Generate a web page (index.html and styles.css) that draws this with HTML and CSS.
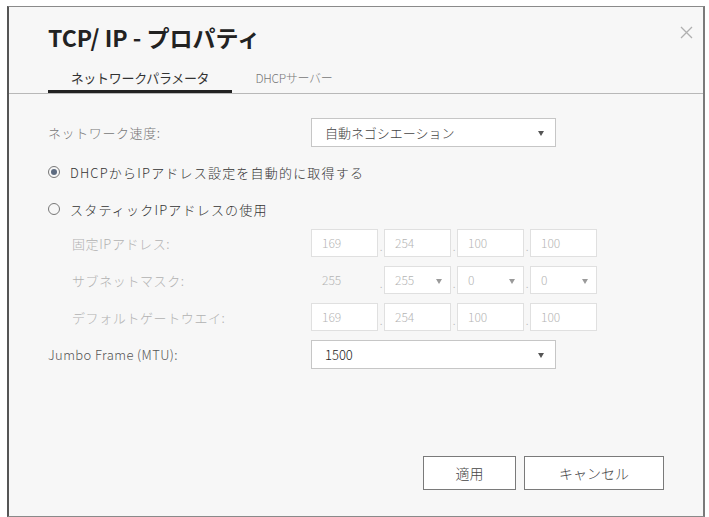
FILE: index.html
```html
<!DOCTYPE html>
<html lang="ja">
<head>
    <meta charset="UTF-8">
    <title>TCP/ IP - プロパティ</title>
    <link rel="stylesheet" href="styles.css">
</head>
<body>
    <div class="dialog">
        <!-- Close button -->
        <span class="close">
            <svg width="13" height="13" viewBox="0 0 13 13"><path d="M1 1 L12 12 M12 1 L1 12" stroke="#b0b0b0" stroke-width="1.3" fill="none"/></svg>
        </span>

        <h1 class="title">TCP/ IP - プロパティ</h1>

        <!-- Tabs -->
        <div class="tabs">
            <div class="tab active">ネットワークパラメータ</div>
            <div class="tab">DHCPサーバー</div>
        </div>

        <div class="form">
            <div class="row">
                <label class="label">ネットワーク速度:</label>
                <div class="select wide">自動ネゴシエーション<span class="arrow"></span></div>
            </div>

            <div class="row radio-row first">
                <span class="radio checked"></span>
                <span class="radio-text">DHCPからIPアドレス設定を自動的に取得する</span>
            </div>

            <div class="row radio-row second">
                <span class="radio"></span>
                <span class="radio-text">スタティックIPアドレスの使用</span>
            </div>

            <div class="row">
                <label class="label sub">固定IPアドレス:</label>
                <div class="ip">
                    <span class="box">169</span><span class="dot">.</span>
                    <span class="box">254</span><span class="dot">.</span>
                    <span class="box">100</span><span class="dot">.</span>
                    <span class="box">100</span>
                </div>
            </div>

            <div class="row">
                <label class="label sub">サブネットマスク:</label>
                <div class="ip">
                    <span class="box plain">255</span><span class="dot">.</span>
                    <span class="box sel">255<span class="arrow"></span></span><span class="dot">.</span>
                    <span class="box sel">0<span class="arrow"></span></span><span class="dot">.</span>
                    <span class="box sel">0<span class="arrow"></span></span>
                </div>
            </div>

            <div class="row">
                <label class="label sub">デフォルトゲートウエイ:</label>
                <div class="ip">
                    <span class="box">169</span><span class="dot">.</span>
                    <span class="box">254</span><span class="dot">.</span>
                    <span class="box">100</span><span class="dot">.</span>
                    <span class="box">100</span>
                </div>
            </div>

            <div class="row">
                <label class="label mtu">Jumbo Frame (MTU):</label>
                <div class="select wide dark">1500<span class="arrow"></span></div>
            </div>
        </div>

        <!-- Footer buttons -->
        <div class="buttons">
            <button class="btn apply">適用</button>
            <button class="btn cancel">キャンセル</button>
        </div>
    </div>
</body>
</html>
```

FILE: styles.css
```css
body {
    margin: 0;
    background: #fff;
    font-family: "Noto Sans CJK JP", "Noto Sans", sans-serif;
    font-weight: 300;
}
.dialog {
    position: relative;
    box-sizing: border-box;
    width: 698px;
    height: 511px;
    margin: 6px 0 0 7px;
    background: #f7f7f7;
    border: 1px solid #8a8a8a;
    border-left: 2px solid #555;
    border-right: 2px solid #7a7a7a;
    display: flex;
    flex-direction: column;
}
.close {
    position: absolute;
    top: 13px;
    right: 10px;
    cursor: pointer;
}
.title {
    margin: 15px 0 0 39px;
    font-size: 23px;
    font-weight: bold;
    color: #222;
    line-height: 31px;
    letter-spacing: 0;
}
.tabs {
    display: flex;
    padding-left: 39px;
    margin-top: 13px;
    border-bottom: 1px solid #b8b8b8;
}
.tab {
    height: 27px;
    line-height: 24px;
    font-size: 12px;
    color: #777;
    text-align: center;
}
.tab.active {
    width: 184px;
    font-size: 13px;
    font-weight: 400;
    color: #333;
    letter-spacing: -0.3px;
    border-bottom: 3px solid #222;
    box-sizing: border-box;
}
.tab:not(.active) {
    width: 104px;
    margin-left: 10px;
    font-size: 12px;
    letter-spacing: -0.3px;
}
.form {
    display: flex;
    flex-direction: column;
    gap: 9px;
    padding: 24px 0 0 39px;
}
.row {
    display: flex;
    align-items: center;
    height: 28px;
}
.row.first {
    margin-top: 3px;
}
.row.second {
    margin-bottom: -3px;
}
.label {
    width: 263px;
    font-size: 13px;
    color: #777;
    letter-spacing: 0.6px;
}
.label.sub {
    padding-left: 24px;
    width: 239px;
    color: #b2b2b2;
}
.label.mtu {
    color: #555;
    letter-spacing: 0.4px;
}
.select {
    position: relative;
    box-sizing: border-box;
    height: 29px;
    line-height: 27px;
    padding-left: 13px;
    background: #fff;
    border: 1px solid #c6c6c6;
    font-size: 13px;
    color: #444;
}
.select.wide {
    width: 245px;
}
.select.dark {
    color: #222;
}
.arrow {
    position: absolute;
    right: 11px;
    top: 12px;
    width: 0;
    height: 0;
    border-left: 3.5px solid transparent;
    border-right: 3.5px solid transparent;
    border-top: 5px solid #555;
}
.radio {
    box-sizing: border-box;
    width: 12px;
    height: 12px;
    border: 1px solid #777;
    border-radius: 50%;
    margin-right: 10px;
    position: relative;
}
.radio.checked::after {
    content: "";
    position: absolute;
    left: 2px;
    top: 2px;
    width: 6px;
    height: 6px;
    border-radius: 50%;
    background: #5d6b80;
}
.radio-text {
    font-size: 13px;
    color: #333;
    letter-spacing: 1.2px;
}
.ip {
    display: flex;
    align-items: stretch;
    height: 28px;
}
.box {
    position: relative;
    box-sizing: border-box;
    width: 67px;
    padding-left: 10px;
    line-height: 26px;
    background: #fff;
    border: 1px solid #e0e0e0;
    font-size: 12px;
    color: #b5b5b5;
}
.box.plain {
    background: none;
    border-color: transparent;
}
.box.sel .arrow {
    border-top-color: #9a9a9a;
    right: 8px;
    top: 12px;
}
.dot {
    width: 6px;
    font-size: 11px;
    line-height: 34px;
    color: #bbb;
    text-align: center;
}
.buttons {
    display: flex;
    justify-content: flex-end;
    gap: 8px;
    margin-top: auto;
    padding: 0 39px 26px 0;
}
.btn {
    height: 34px;
    background: #fff;
    border: 1px solid #7a7a7a;
    font-family: inherit;
    font-weight: 300;
    font-size: 14px;
    color: #444;
    cursor: pointer;
}
.btn.apply {
    width: 93px;
}
.btn.cancel {
    width: 140px;
}
```
